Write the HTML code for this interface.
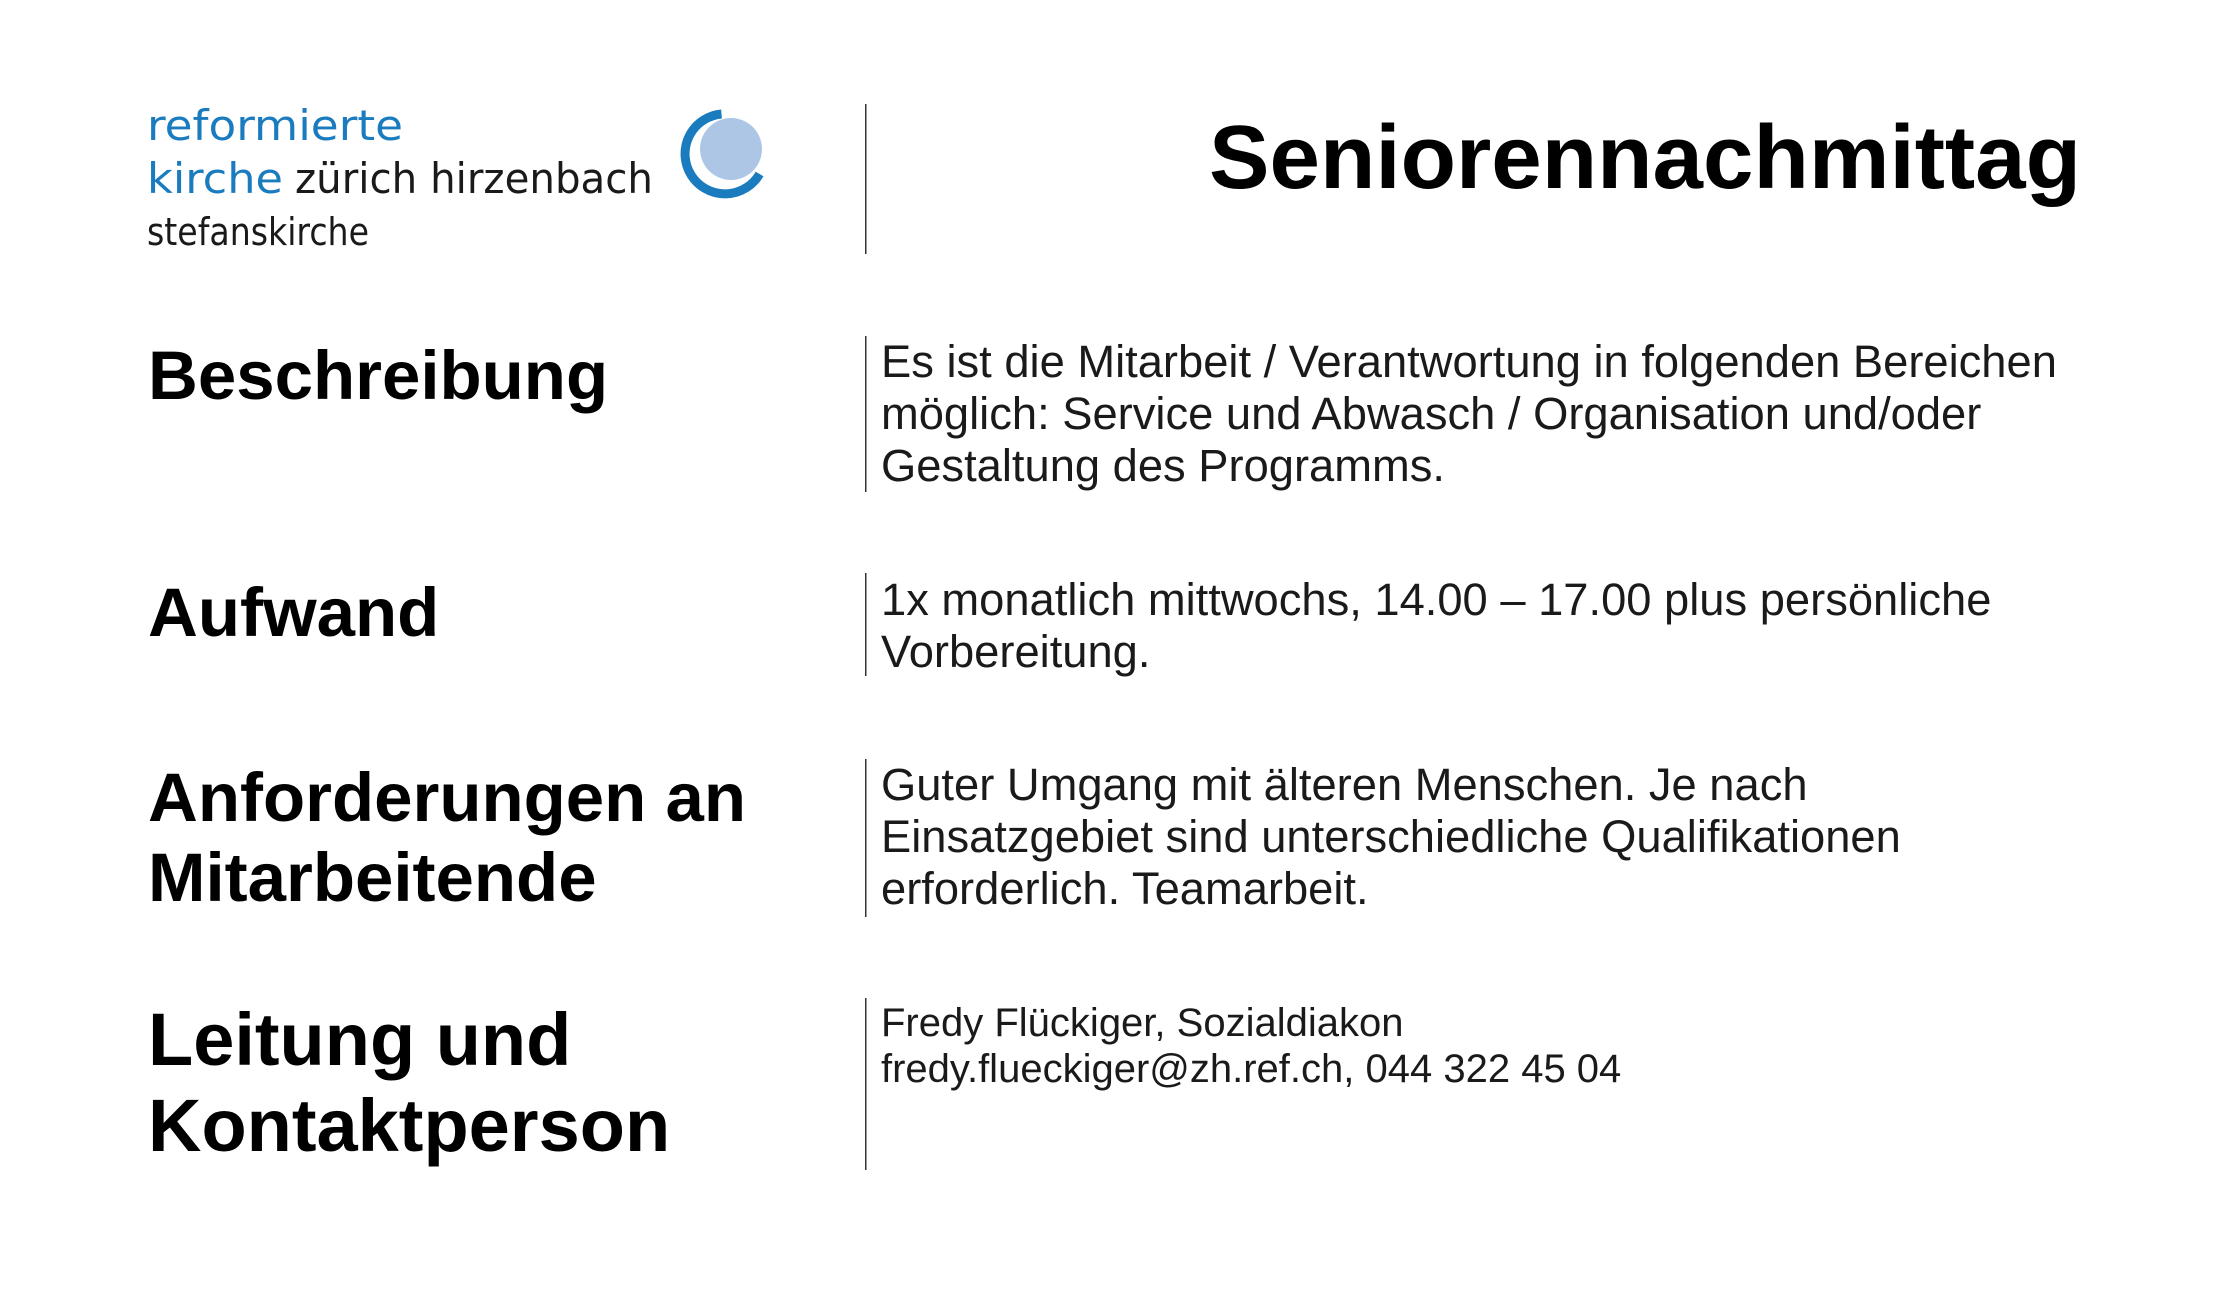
<!DOCTYPE html>
<html><head><meta charset="utf-8"><style>
html,body{margin:0;padding:0;background:#fff;width:2230px;height:1304px;overflow:hidden}
svg{display:block}
.b{font-family:"Liberation Sans",Arial,sans-serif;font-weight:bold;fill:#000}
.t{font-family:"Liberation Sans",Arial,sans-serif;fill:#1a1a1a}
.l{font-family:"DejaVu Sans","Liberation Sans",sans-serif}
</style></head><body>
<svg width="2230" height="1304" viewBox="0 0 2230 1304" xmlns="http://www.w3.org/2000/svg">
<rect width="2230" height="1304" fill="#fff"/>
<g transform="translate(-4,-2)">
<text class="l" x="151" y="142" font-size="42" fill="#1a7cbf" textLength="256" lengthAdjust="spacingAndGlyphs">reformierte</text>
<text class="l" x="151" y="195" font-size="42" fill="#1a7cbf" textLength="136" lengthAdjust="spacingAndGlyphs">kirche</text>
<text class="l" x="299" y="195" font-size="42" fill="#1a1a1a" textLength="358" lengthAdjust="spacingAndGlyphs">zürich hirzenbach</text>
<text class="l" x="151" y="247" font-size="38" fill="#1a1a1a" textLength="222" lengthAdjust="spacingAndGlyphs">stefanskirche</text>
</g>
<circle cx="731" cy="149" r="31" fill="#adc6e6"/>
<path d="M721.5 114 A40 40 0 1 0 759.6 174" fill="none" stroke="#1a7cbf" stroke-width="9"/>
<g fill="#333">
<rect x="865" y="104" width="1.5" height="150"/>
<rect x="865" y="336" width="1.5" height="156"/>
<rect x="865" y="573" width="1.5" height="103"/>
<rect x="865" y="759" width="1.5" height="158"/>
<rect x="865" y="998" width="1.5" height="172"/>
</g>
<g transform="translate(-4,-4)">
<text class="b" x="2085" y="192" font-size="90" text-anchor="end" textLength="872" lengthAdjust="spacingAndGlyphs">Seniorennachmittag</text>
<text class="b" x="152" y="403" font-size="69">Beschreibung</text>
<text class="b" x="152" y="640" font-size="69">Aufwand</text>
<text class="b" x="152" y="825" font-size="69">Anforderungen an</text>
<text class="b" x="152" y="905" font-size="69">Mitarbeitende</text>
<text class="b" x="152" y="1069" font-size="74">Leitung und</text>
<text class="b" x="152" y="1155" font-size="74">Kontaktperson</text>
</g>
<g transform="translate(-12,0)">
<text class="t" x="893" y="377" font-size="45.3">Es ist die Mitarbeit / Verantwortung in folgenden Bereichen</text>
<text class="t" x="893" y="429" font-size="45.3">möglich: Service und Abwasch / Organisation und/oder</text>
<text class="t" x="893" y="481" font-size="45.3">Gestaltung des Programms.</text>
<text class="t" x="893" y="615" font-size="45.3">1x monatlich mittwochs, 14.00 – 17.00 plus persönliche</text>
<text class="t" x="893" y="667" font-size="45.3">Vorbereitung.</text>
<text class="t" x="893" y="800" font-size="45.3">Guter Umgang mit älteren Menschen. Je nach</text>
<text class="t" x="893" y="852" font-size="45.3">Einsatzgebiet sind unterschiedliche Qualifikationen</text>
<text class="t" x="893" y="904" font-size="45.3">erforderlich. Teamarbeit.</text>
<text class="t" x="893" y="1036" font-size="40" fill="#000">Fredy Flückiger, Sozialdiakon</text>
<text class="t" x="893" y="1082" font-size="40" fill="#000">fredy.flueckiger@zh.ref.ch, 044 322 45 04</text>
</g>
</svg>
</body></html>
